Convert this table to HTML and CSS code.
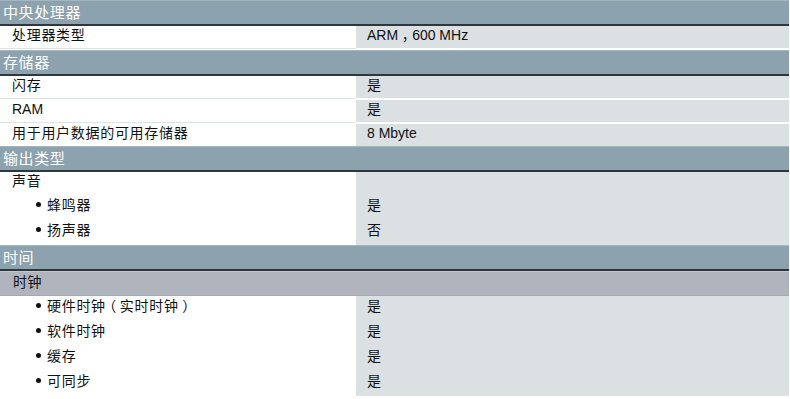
FILE: index.html
```html
<!DOCTYPE html>
<html lang="zh-CN">
<head>
<meta charset="utf-8">
<title>技术数据</title>
<link rel="stylesheet" href="styles.css">
</head>
<body>
<div class="table">
  <div class="section">中央处理器</div>
  <div class="row sep"><div class="label">处理器类型</div><div class="value">ARM<span class="punct">，</span>600 MHz</div></div>

  <div class="section">存储器</div>
  <div class="row sep"><div class="label">闪存</div><div class="value">是</div></div>
  <div class="row sep"><div class="label latin">RAM</div><div class="value">是</div></div>
  <div class="row short"><div class="label">用于用户数据的可用存储器</div><div class="value">8 Mbyte</div></div>

  <div class="section">输出类型</div>
  <div class="row"><div class="label">声音</div><div class="value"></div></div>
  <div class="row"><div class="label bullet"><span class="dot"></span>蜂鸣器</div><div class="value">是</div></div>
  <div class="row tall"><div class="label bullet"><span class="dot"></span>扬声器</div><div class="value">否</div></div>

  <div class="section">时间</div>
  <div class="subsection">时钟</div>
  <div class="row tall"><div class="label bullet"><span class="dot"></span>硬件时钟<span class="punct">（</span>实时时钟<span class="punct">）</span></div><div class="value">是</div></div>
  <div class="row tall"><div class="label bullet"><span class="dot"></span>软件时钟</div><div class="value">是</div></div>
  <div class="row tall"><div class="label bullet"><span class="dot"></span>缓存</div><div class="value">是</div></div>
  <div class="row tall"><div class="label bullet"><span class="dot"></span>可同步</div><div class="value">是</div></div>
</div>
</body>
</html>
```

FILE: styles.css
```css
html, body {
  margin: 0;
  padding: 0;
  background: #ffffff;
}

.table {
  width: 789px;
  font-family: "Liberation Sans", "Noto Sans CJK SC", sans-serif;
  color: #111111;
  font-size: 14px;
}

.section {
  height: 23px;
  line-height: 23px;
  background: #8ca2af;
  border-top: 1px solid #a6b6bf;
  border-bottom: 2px solid #30373c;
  color: #ffffff;
  font-size: 15px;
  letter-spacing: 0.6px;
  padding-left: 3px;
}

.subsection {
  height: 23px;
  line-height: 20px;
  background: #b0b4bd;
  border-top: 1px solid #c3c7ce;
  border-bottom: 1px solid #a3a8b1;
  padding-left: 13px;
  letter-spacing: 0.6px;
}

.row {
  display: grid;
  grid-template-columns: 356px 1fr;
  height: 24px;
}

.row.sep {
  height: 23px;
  border-bottom: 1px solid transparent;
}

.row.sep .label {
  border-bottom: 1px solid #dde2e5;
}

.row.sep .value {
  border-bottom: 1px solid #ffffff;
}

.row.short {
  height: 22px;
}

.row.tall {
  height: 25px;
}

.label, .value {
  display: flex;
  align-items: flex-start;
  padding-top: 1px;
  line-height: 16px;
  box-sizing: border-box;
}

.row.tall .label,
.row.tall .value {
  padding-top: 2px;
}

.label {
  background: #ffffff;
  padding-left: 12px;
  letter-spacing: 0.7px;
}

.label.latin {
  letter-spacing: 0;
}

.label.bullet {
  padding-left: 36px;
}

.dot {
  width: 5px;
  height: 5px;
  border-radius: 50%;
  background: #111111;
  margin: 5px 6px 0 0;
  flex: none;
}

.punct {
  font-feature-settings: "halt";
  letter-spacing: 0;
  padding: 0 3.5px;
}

.value {
  background: #dbe0e3;
  padding-left: 11px;
}
```
